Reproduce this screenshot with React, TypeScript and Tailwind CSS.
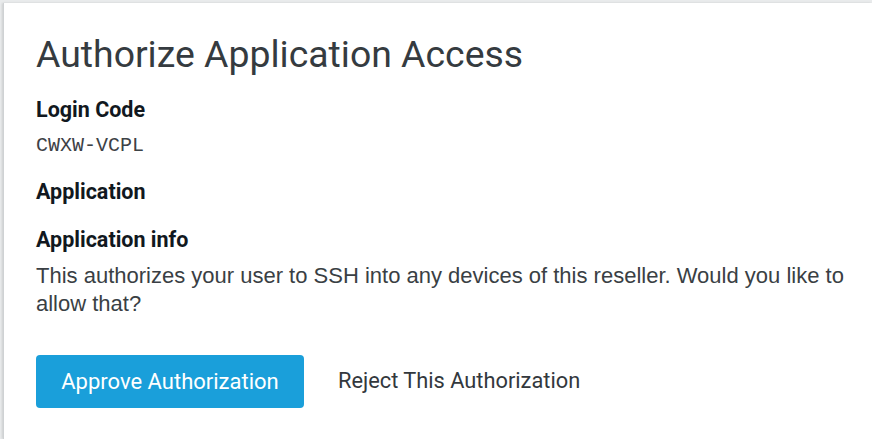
import React from 'react';

export default function App() {
    return (
        <div className="w-[872px] h-[439px] bg-[#e9ebec] pt-[3px] pl-[3px] overflow-hidden">
            {/* Card */}
            <div className="h-full bg-white border-l border-[#cfd2d4] shadow-[-1px_0_2px_rgba(0,0,0,0.12)] pl-[32px] pt-[29px] font-['Roboto',sans-serif]">
                <h1 className="text-[37.4px] leading-[44px] text-[#353b40] font-normal">Authorize Application Access</h1>

                <div className="mt-[21px]">
                    <h3 className="text-[21.5px] leading-[26px] font-bold text-[#111820]">Login Code</h3>
                    <div className="mt-[10px] text-[20px] leading-[26px] text-[#3d4246] font-['Liberation_Mono',monospace]">CWXW-VCPL</div>
                </div>

                <h3 className="mt-[20px] text-[21.5px] leading-[26px] font-bold text-[#111820]">Application</h3>

                <div className="mt-[22px] w-[830px]">
                    <h3 className="text-[21.5px] leading-[26px] font-bold text-[#111820]">Application info</h3>
                    <p className="mt-[9px] text-[22px] leading-[28px] text-[#3a3f44] font-['Liberation_Sans',Arial,sans-serif]">
                        This authorizes your user to SSH into any devices of this reseller. Would you like to allow that?
                    </p>
                </div>

                <div className="mt-[37px] flex items-center gap-[34px]">
                    <button className="h-[53px] w-[268px] rounded-[4px] bg-[#1a9fda] text-white text-[22px]">
                        Approve Authorization
                    </button>
                    <button className="text-[21.8px] text-[#33383d]">Reject This Authorization</button>
                </div>
            </div>
        </div>
    );
}
